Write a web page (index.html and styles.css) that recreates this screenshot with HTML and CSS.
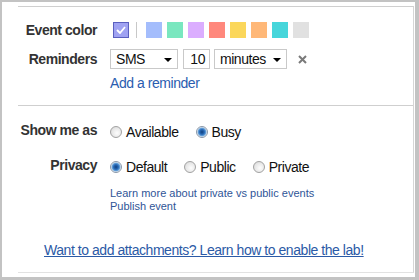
FILE: index.html
```html
<!DOCTYPE html>
<html lang="en">
<head>
    <meta charset="UTF-8">
    <meta name="viewport" content="width=device-width, initial-scale=1.0">
    <title>Event options</title>
    <link rel="stylesheet" href="styles.css">
</head>
<body>
    <div class="frame">
        <div class="form">
            <!-- Colour picker -->
            <div class="row color-row">
                <div class="label">Event color</div>
                <div class="swatches">
                    <span class="swatch checked">
                        <svg width="10" height="8" viewBox="0 0 10 8"><path d="M1 4 L4 7 L9 1" fill="none" stroke="#fff" stroke-width="1.8"/></svg>
                    </span>
                    <span class="swatch-sep"></span>
                    <span class="swatch" style="background:#a4bdfc"></span>
                    <span class="swatch" style="background:#7ae7bf"></span>
                    <span class="swatch" style="background:#dbadff"></span>
                    <span class="swatch" style="background:#ff887c"></span>
                    <span class="swatch" style="background:#fbd75b"></span>
                    <span class="swatch" style="background:#ffb878"></span>
                    <span class="swatch" style="background:#46d6db"></span>
                    <span class="swatch" style="background:#e1e1e1"></span>
                </div>
            </div>

            <!-- Reminders -->
            <div class="row reminder-row">
                <div class="label">Reminders</div>
                <div class="controls">
                    <div class="select method">SMS <span class="arrow"></span></div>
                    <div class="num-input">10</div>
                    <div class="select unit">minutes <span class="arrow"></span></div>
                    <svg class="remove" width="9" height="9" viewBox="0 0 9 9"><path d="M1 1 L8 8 M8 1 L1 8" stroke="#7a7a7a" stroke-width="2"/></svg>
                </div>
            </div>
            <div class="row add-row">
                <div class="label"></div>
                <a href="#" class="link">Add a reminder</a>
            </div>

            <hr class="divider">

            <div class="row radio-row">
                <div class="label">Show me as</div>
                <div class="options">
                    <label class="option"><span class="radio"></span>Available</label>
                    <label class="option"><span class="radio on"></span>Busy</label>
                </div>
            </div>
            <div class="row radio-row privacy-row">
                <div class="label">Privacy</div>
                <div class="options">
                    <label class="option"><span class="radio on"></span>Default</label>
                    <label class="option"><span class="radio"></span>Public</label>
                    <label class="option"><span class="radio"></span>Private</label>
                </div>
            </div>
            <div class="row small-links">
                <div class="label"></div>
                <div>
                    <a href="#" class="small-link">Learn more about private vs public events</a><br>
                    <a href="#" class="small-link">Publish event</a>
                </div>
            </div>

            <p class="lab-note"><a href="#">Want to add attachments? Learn how to enable the lab!</a></p>
        </div>
    </div>
</body>
</html>
```

FILE: styles.css
```css
body {
    margin: 0;
    background-color: #c3c3c3;
    font-family: "Liberation Sans", Arial, sans-serif;
    font-size: 14px;
    letter-spacing: -0.45px;
    color: #222;
}
.frame {
    margin: 2px 4px 0 2px;
    height: 275px;
    background-color: #fff;
    padding-top: 4px;
    box-sizing: border-box;
}
.form {
    margin-left: 16px;
    margin-right: 1px;
    height: 267px;
    border-top: 1px solid #cfcfcf;
    border-right: 1px solid #d6d6d6;
    border-bottom: 1px solid #e2e2e2;
    box-sizing: border-box;
}
.row {
    display: flex;
    align-items: center;
    line-height: 16px;
}
.label {
    width: 79px;
    margin-right: 13px;
    flex-shrink: 0;
    text-align: right;
    font-weight: bold;
    color: #333;
}
.color-row {
    margin-top: 15px;
}
.swatches {
    display: flex;
    align-items: center;
    gap: 5px;
    padding-left: 3px;
}
.swatch {
    width: 16px;
    height: 16px;
    display: block;
}
.swatch.checked {
    box-sizing: border-box;
    background-color: #9fa2f2;
    border: 1px solid #5a5fbf;
    display: flex;
    align-items: center;
    justify-content: center;
}
.swatch-sep {
    width: 1px;
    height: 16px;
    background-color: #c8c8c8;
    margin: 0 4px 0 2px;
}
.reminder-row {
    margin-top: 11px;
}
.controls {
    display: flex;
    align-items: center;
}
.select, .num-input {
    height: 20px;
    box-sizing: border-box;
    border: 1px solid #c9c9c9;
    background-color: #fff;
    line-height: 18px;
    color: #111;
    position: relative;
}
.select.method {
    width: 68px;
    padding-left: 5px;
}
.num-input {
    width: 27px;
    margin-left: 5px;
    padding-right: 4px;
    text-align: right;
}
.select.unit {
    width: 73px;
    margin-left: 4px;
    padding-left: 5px;
}
.arrow {
    position: absolute;
    right: 5px;
    top: 8px;
    border-left: 4px solid transparent;
    border-right: 4px solid transparent;
    border-top: 4px solid #000;
}
.remove {
    margin-left: 11px;
}
.add-row {
    margin-top: 6px;
}
.link, .small-link, .lab-note a {
    color: #2a5db0;
    text-decoration: none;
}
.divider {
    border: 0;
    border-top: 1px solid #cfcfcf;
    margin: 14px 0 0 0;
}
.radio-row {
    margin-top: 18px;
}
.radio-row .label {
    position: relative;
    top: -2px;
}
.privacy-row {
    margin-top: 19px;
}
.options {
    display: flex;
    gap: 17px;
}
.option {
    display: flex;
    align-items: center;
    color: #111;
}
.radio {
    width: 12px;
    height: 12px;
    box-sizing: border-box;
    border-radius: 50%;
    border: 1px solid #a2a2a2;
    background: radial-gradient(circle at 60% 60%, #fdfdfd 0%, #e6e6e6 60%, #cfcfcf 100%);
    margin-right: 4px;
}
.radio.on {
    border-color: #8a97a8;
    background: radial-gradient(circle, #0f3f7e 0%, #2a6cb9 35%, #6aa5dc 55%, #eef2f6 70%, #d9dde2 100%);
}
.small-links {
    margin-top: 12px;
    font-size: 11px;
    letter-spacing: 0;
    line-height: 13px;
}
.small-link {
    color: #2f5597;
}
.lab-note {
    margin: 29px 0 0 26px;
    line-height: 16px;
}
.lab-note a {
    text-decoration: underline;
    color: #2b5aa6;
}
```
